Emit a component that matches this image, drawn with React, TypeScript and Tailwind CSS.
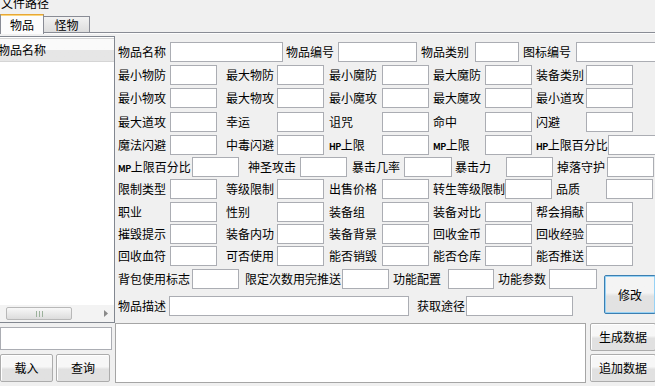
import React from 'react';

type Cell = { l: string; cw?: string; lw: string; iw: string };

const STD_CW = ['w-[108px]', 'w-[103px]', 'w-[104px]', 'w-[103px]', ''];
const STD_LW = ['w-[52px]', 'w-[51px]', 'w-[53px]', 'w-[52px]', 'w-[50px]'];

const std = (labels: string[]): Cell[] =>
  labels.map((l, i) => ({ l, cw: STD_CW[i], lw: STD_LW[i], iw: 'w-[47px]' }));

const rows: { mt: string; cells: Cell[] }[] = [
  {
    mt: '',
    cells: [
      { l: '物品名称', cw: 'w-[168px]', lw: 'w-[52px]', iw: 'w-[113px]' },
      { l: '物品编号', cw: 'w-[135px]', lw: 'w-[52px]', iw: 'w-[79px]' },
      { l: '物品类别', cw: 'w-[102px]', lw: 'w-[54px]', iw: 'w-[44px]' },
      { l: '图标编号', lw: 'w-[53px]', iw: 'w-[82px]' },
    ],
  },
  { mt: 'mt-[3px]', cells: std(['最小物防', '最大物防', '最小魔防', '最大魔防', '装备类别']) },
  { mt: 'mt-[3px]', cells: std(['最小物攻', '最大物攻', '最小魔攻', '最大魔攻', '最小道攻']) },
  { mt: 'mt-[4px]', cells: std(['最大道攻', '幸运', '诅咒', '命中', '闪避']) },
  {
    mt: 'mt-[3px]',
    cells: [
      ...std(['魔法闪避', '中毒闪避', 'HP上限', 'MP上限']),
      { l: 'HP上限百分比', lw: 'w-[72px]', iw: 'w-[50px]' },
    ],
  },
  {
    mt: 'mt-[2px]',
    cells: [
      { l: 'MP上限百分比', cw: 'w-[130px]', lw: 'w-[74px]', iw: 'w-[47px]' },
      { l: '神圣攻击', cw: 'w-[104px]', lw: 'w-[52px]', iw: 'w-[47px]' },
      { l: '暴击几率', cw: 'w-[103px]', lw: 'w-[52px]', iw: 'w-[48px]' },
      { l: '暴击力', cw: 'w-[102px]', lw: 'w-[51px]', iw: 'w-[47px]' },
      { l: '掉落守护', lw: 'w-[50px]', iw: 'w-[47px]' },
    ],
  },
  {
    mt: 'mt-[2px]',
    cells: [
      ...std(['限制类型', '等级限制', '出售价格']),
      { l: '转生等级限制', cw: 'w-[123px]', lw: 'w-[72px]', iw: 'w-[47px]' },
      { l: '品质', lw: 'w-[50px]', iw: 'w-[47px]' },
    ],
  },
  { mt: 'mt-[3px]', cells: std(['职业', '性别', '装备组', '装备对比', '帮会捐献']) },
  { mt: 'mt-[2px]', cells: std(['摧毁提示', '装备内功', '装备背景', '回收金币', '回收经验']) },
  { mt: 'mt-[2px]', cells: std(['回收血符', '可否使用', '能否销毁', '能否仓库', '能否推送']) },
];

const row11: Cell[] = [
  { l: '背包使用标志', cw: 'w-[127px]', lw: 'w-[74px]', iw: 'w-[47px]' },
  { l: '限定次数用完推送', cw: 'w-[148px]', lw: 'w-[97px]', iw: 'w-[47px]' },
  { l: '功能配置', cw: 'w-[105px]', lw: 'w-[55px]', iw: 'w-[46px]' },
  { l: '功能参数', lw: 'w-[51px]', iw: 'w-[48px]' },
];

const row12: Cell[] = [
  { l: '物品描述', cw: 'w-[299px]', lw: 'w-[51px]', iw: 'w-[240px]' },
  { l: '获取途径', lw: 'w-[49px]', iw: 'w-[107px]' },
];

function Label({ text, className }: { text: string; className: string }) {
  const small = text.startsWith('HP') || text.startsWith('MP');
  return (
    <span className={`${className} shrink-0 whitespace-nowrap leading-[20px]`}>
      {small ? (
        <>
          <span className="text-[9px] font-bold tracking-[-0.5px]">{text.slice(0, 2)}</span>
          {text.slice(2)}
        </>
      ) : (
        text
      )}
    </span>
  );
}

function Row({ cells, mt }: { cells: Cell[]; mt: string }) {
  return (
    <div className={`flex h-[20px] ${mt}`}>
      {cells.map((c) => (
        <div key={c.l} className={`flex shrink-0 ${c.cw || ''}`}>
          <Label text={c.l} className={c.lw} />
          <div className={`${c.iw} h-[20px] shrink-0 border border-[#abadb3] bg-white`} />
        </div>
      ))}
    </div>
  );
}

function WinButton({ children, className }: { children: React.ReactNode; className: string }) {
  return (
    <button
      className={`${className} flex shrink-0 items-center justify-center rounded-[2px] border border-[#acacac] bg-linear-to-b from-[#f7f7f7] from-45% to-[#e1e1e1] to-55% text-[12px] text-black shadow-[inset_1px_1px_0_#ffffff]`}
    >
      {children}
    </button>
  );
}

export default function App() {
  return (
    <div className="relative h-[386px] w-[655px] overflow-hidden bg-[#f0f0f0] font-['Noto_Sans_CJK_SC','Liberation_Sans',sans-serif] text-[12px] text-black">
      {/* 文件路径 */}
      <div className="h-[14px] overflow-hidden">
        <div className="-mt-[5px] pl-[1px] leading-[16px]">文件路径</div>
      </div>

      {/* Tabs */}
      <div className="relative flex h-[19px] items-end">
        <div className="relative z-10 -mb-px flex h-[20px] w-[44px] items-center justify-center border-x border-t border-[#898c95] border-t-[#e8a735] bg-[#fcfcfc] shadow-[inset_0_1px_0_#f9d680]">
          物品
        </div>
        <div className="flex h-[17px] w-[46px] items-center justify-center border-r border-t border-[#898c95] bg-linear-to-b from-[#f2f2f2] to-[#dcdcdc]">
          怪物
        </div>
        <div className="absolute bottom-0 left-0 right-0 border-b border-[#898c95]" />
      </div>

      {/* Main */}
      <div className="flex h-[353px] border-t border-[#fcfcfc]">
        {/* Left column */}
        <div className="flex w-[115px] shrink-0 flex-col">
          <div className="mt-[2px] flex h-[287px] flex-col border-y border-r border-[#828790] bg-white">
            <div className="mt-[1px] flex h-[24px] items-center border-y border-[#d5d5d5] bg-linear-to-b from-[#fafafa] from-50% to-[#e6e6e6] to-50%">
              <span className="-ml-[2px]">物品名称</span>
            </div>
            <div className="flex-1" />
            <div className="flex h-[17px] items-center bg-[#f3f3f3]">
              <div className="ml-[6px] flex h-[13px] w-[66px] items-center justify-center rounded-[2px] border border-[#b8b8b8] bg-linear-to-b from-[#f8f8f8] to-[#dcdcdc]">
                <div className="flex gap-[2px]">
                  <div className="h-[6px] w-px bg-[#9cb29c]" />
                  <div className="h-[6px] w-px bg-[#9cb29c]" />
                  <div className="h-[6px] w-px bg-[#9cb29c]" />
                </div>
              </div>
              <svg className="ml-auto mr-[6px]" width="4" height="7" viewBox="0 0 4 7">
                <path d="M0 0 L4 3.5 L0 7 Z" fill="#8a8a8a" />
              </svg>
            </div>
          </div>
          <div className="mt-[4px] h-[23px] w-[112px] border border-[#abadb3] bg-white" />
          <div className="mt-[4px] flex gap-[3px]">
            <WinButton className="h-[28px] w-[53px]">载入</WinButton>
            <WinButton className="h-[28px] w-[54px]">查询</WinButton>
          </div>
        </div>

        {/* Right column */}
        <div className="flex flex-1 flex-col">
          <div className="h-[289px] pl-[3px] pt-[8px]">
            {rows.map((r, i) => (
              <Row key={i} cells={r.cells} mt={r.mt} />
            ))}
            <div className="flex">
              <div className="w-[486px] shrink-0">
                <Row cells={row11} mt="mt-[3px]" />
                <Row cells={row12} mt="mt-[7px]" />
              </div>
              <button className="mt-[9px] flex h-[39px] w-[52px] shrink-0 items-center justify-center rounded-[2px] border border-[#3c7fb1] bg-linear-to-b from-[#f4f4f4] from-45% to-[#e2e2e2] to-55% text-[12px] shadow-[inset_0_0_0_1px_#97d2f5]">
                修改
              </button>
            </div>
          </div>
          <div className="flex">
            <div className="h-[60px] w-[471px] shrink-0 border border-[#a5a5a5] bg-white" />
            <div className="ml-[4px] flex flex-col gap-[3px]">
              <WinButton className="h-[28px] w-[66px]">生成数据</WinButton>
              <WinButton className="h-[28px] w-[66px]">追加数据</WinButton>
            </div>
          </div>
        </div>
      </div>
    </div>
  );
}
